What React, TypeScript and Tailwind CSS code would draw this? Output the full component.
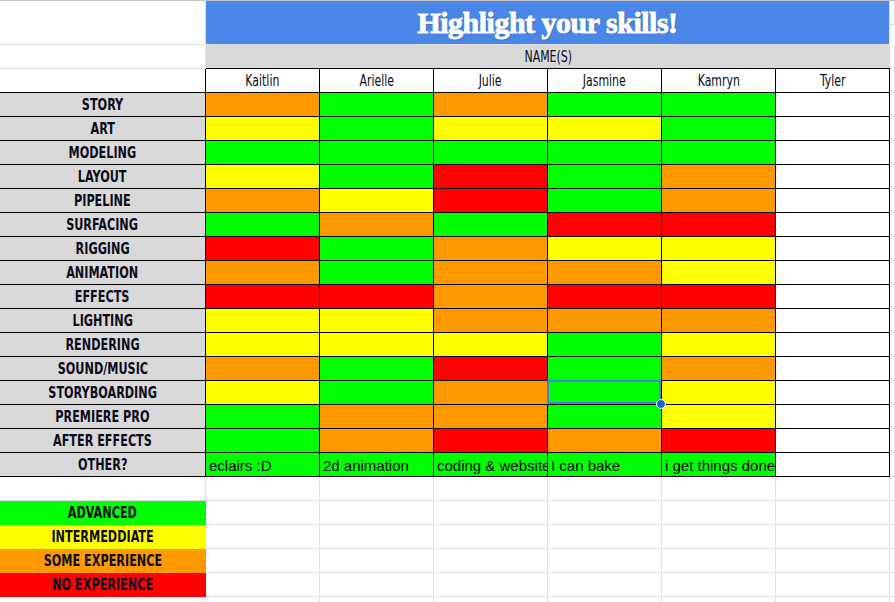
import React from "react";

type Level = "g" | "y" | "o" | "r" | "w";

const fills: Record<Level, string> = {
    g: "bg-[#00ff00]",
    y: "bg-[#ffff00]",
    o: "bg-[#ff9900]",
    r: "bg-[#ff0000]",
    w: "bg-white",
};

const names = ["Kaitlin", "Arielle", "Julie", "Jasmine", "Kamryn", "Tyler"];

// one letter per person, Tyler left blank
const skills: [string, string][] = [
    ["STORY", "ogoggw"],
    ["ART", "ygyygw"],
    ["MODELING", "gggggw"],
    ["LAYOUT", "ygrgow"],
    ["PIPELINE", "oyrgow"],
    ["SURFACING", "gogrrw"],
    ["RIGGING", "rgoyyw"],
    ["ANIMATION", "ogooyw"],
    ["EFFECTS", "rrorrw"],
    ["LIGHTING", "yyooow"],
    ["RENDERING", "yyygyw"],
    ["SOUND/MUSIC", "ogrgow"],
    ["STORYBOARDING", "ygogyw"],
    ["PREMIERE PRO", "googyw"],
    ["AFTER EFFECTS", "gororw"],
];

const other = ["eclairs :D", "2d animation", "coding & website", "I can bake", "i get things done", ""];

const legend: [string, Level][] = [
    ["ADVANCED", "g"],
    ["INTERMEDDIATE", "y"],
    ["SOME EXPERIENCE", "o"],
    ["NO EXPERIENCE", "r"],
];

const oswald = "font-['Liberation_Sans_Narrow','DejaVu_Sans_Condensed',sans-serif]";

function Narrow({ children, bold = false }: { children: React.ReactNode; bold?: boolean }) {
    return (
        <span
            className={`inline-block whitespace-nowrap ${oswald} text-[16px] leading-none text-[#0b0b1a] ${
                bold ? "scale-x-[0.78] font-bold" : "scale-x-[0.76]"
            }`}
        >
            {children}
        </span>
    );
}

function Blank({ fill = "bg-white" }: { fill?: string }) {
    return <div className={`h-6 border-r border-b border-[#e2e2e2] ${fill}`} />;
}

function Label({ text, fill = "bg-[#d9d9d9]", grid = false }: { text: string; fill?: string; grid?: boolean }) {
    return (
        <div
            className={`flex h-6 items-center justify-center border-r border-b pt-px ${
                grid ? "border-transparent" : "border-black"
            } ${fill}`}
        >
            <Narrow bold>{text}</Narrow>
        </div>
    );
}

export default function App() {

    return (

        <div className="h-[602px] w-[895px] overflow-hidden border-t border-[#c4c4c4] bg-white">

            <div className="grid grid-cols-[206px_repeat(6,114px)_1fr]">

                {/* title row */}
                <div className="h-[44px] border-r border-b border-[#e2e2e2]" />
                <div className="col-span-6 flex h-[44px] items-center justify-center border-r border-b border-[#e2e2e2] bg-[#4a86e8] pb-px">
                    <span className="font-['Liberation_Serif',serif] text-[30px] font-black tracking-[-0.5px] text-white [-webkit-text-stroke:0.9px_white] [text-shadow:1px_1px_1px_rgba(0,0,0,0.25)]">
                        Highlight your skills!
                    </span>
                </div>
                <Blank />

                {/* names label row */}
                <div className="h-6 border-r border-b border-[#e2e2e2]" />
                <div className="col-span-6 flex h-6 items-center justify-center border-b border-black bg-[#d9d9d9] pt-px">
                    <Narrow>NAME(S)</Narrow>
                </div>
                <Blank />

                {/* names */}
                <div className="h-6 border-r border-b border-black" />
                {names.map((name) => (
                    <div
                        key={name}
                        className="flex h-6 items-center justify-center border-r border-b border-black pt-px"
                    >
                        <Narrow>{name}</Narrow>
                    </div>
                ))}
                <Blank />

                {/* skill rows */}
                {skills.map(([skill, levels]) => (
                    <React.Fragment key={skill}>
                        <Label text={skill} />
                        {levels.split("").map((level, i) => {
                            const selected = skill === "STORYBOARDING" && i === 3;
                            return (
                                <div
                                    key={i}
                                    className={`relative h-6 border-r border-b border-black ${fills[level as Level]} ${
                                        selected ? "z-10" : ""
                                    }`}
                                >
                                    {selected && (
                                        <>
                                            <div className="absolute -top-px -left-px right-0 bottom-0 border-2 border-[#4a7fe3]" />
                                            <div className="absolute -right-[5px] -bottom-[5px] h-[10px] w-[10px] rounded-full border border-white bg-[#1a62d6]" />
                                        </>
                                    )}
                                </div>
                            );
                        })}
                        <Blank />
                    </React.Fragment>
                ))}

                {/* other */}
                <Label text="OTHER?" />
                {other.map((text, i) => (
                    <div
                        key={i}
                        className={`h-6 overflow-hidden whitespace-nowrap border-r border-b border-black pl-[3px] pt-[3px] font-['Liberation_Sans',Arial,sans-serif] text-[15px] leading-5 text-black ${
                            text ? "bg-[#00ff00]" : "bg-white"
                        }`}
                    >
                        {text}
                    </div>
                ))}
                <Blank />

                {/* empty row */}
                {Array.from({ length: 8 }).map((_, i) => (
                    <Blank key={i} />
                ))}

                {/* legend */}
                {legend.map(([text, level]) => (
                    <React.Fragment key={text}>
                        <Label text={text} fill={fills[level]} grid />
                        {Array.from({ length: 7 }).map((_, i) => (
                            <Blank key={i} />
                        ))}
                    </React.Fragment>
                ))}

                {Array.from({ length: 8 }).map((_, i) => (
                    <Blank key={i} />
                ))}

            </div>

        </div>

    );

}
